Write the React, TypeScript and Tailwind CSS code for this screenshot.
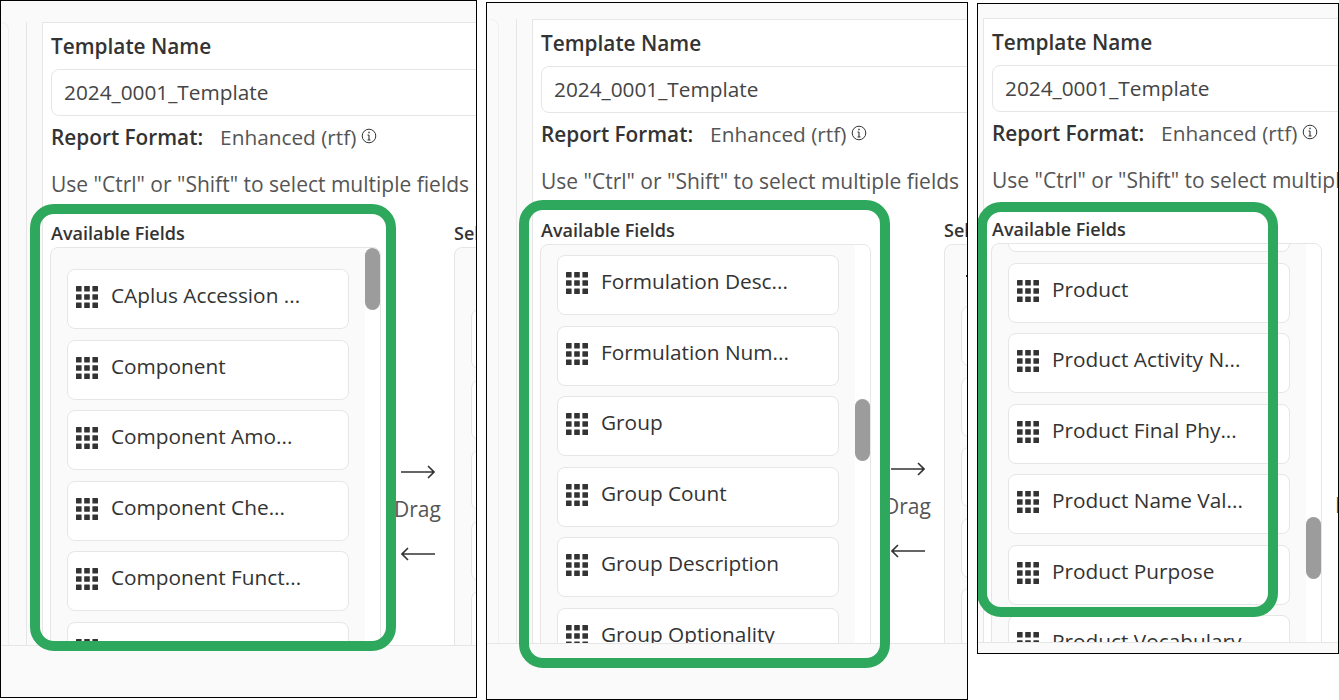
import { clsx } from "clsx";

const iconDots = [0, 1, 2];

function GripIcon() {
  return (
    <svg width="22" height="22" viewBox="0 0 22 22" className="shrink-0 fill-[#333333]">
      {iconDots.map((row) =>
        iconDots.map((col) => <rect key={`${row}-${col}`} x={col * 8.2} y={row * 8.2} width="5.6" height="5.6" rx="0.5" />),
      )}
    </svg>
  );
}

function FieldCard({ label }: { label?: string }) {
  return (
    <div className="flex h-[60px] w-[282px] shrink-0 gap-[13px] rounded-[8px] border border-[#e6e6e6] bg-white pt-[16px] pl-[8px]">
      {label && (
        <>
          <GripIcon />
          <span className="-mt-[5px] text-[20.8px] leading-[28px] text-[#333333]">{label}</span>
        </>
      )}
    </div>
  );
}

function Arrow({ flip }: { flip?: boolean }) {
  return (
    <svg width="34" height="14" viewBox="0 0 34 14" className={clsx("fill-none stroke-[#333333]", flip && "rotate-180")}>
      <path d="M0 7H33M27 1L33 7L27 13" strokeWidth="1.6" />
    </svg>
  );
}

type PanelProps = {
  className: string;
  bodyClass: string;
  listClass: string;
  barClass: string;
  footerClass: string;
  ringClass: string;
  fields: string[];
};

function Panel({ className, bodyClass, listClass, barClass, footerClass, ringClass, fields }: PanelProps) {
  return (
    <div className={clsx("relative flex shrink-0 flex-col overflow-hidden border border-black bg-[#fafafa]", className)}>
      <div className={clsx("flex min-h-0 flex-1 overflow-hidden", bodyClass)}>
        {/* left rail of the app behind the form */}
        <div className="flex h-[800px] w-[41px] shrink-0">
          <div className="h-full w-[8px] rounded-tr-[8px] border-t border-r border-[#f0f0f0] bg-[#fafafa]" />
          <div className="ml-[17px] h-full w-px bg-[#e6e6e6]" />
        </div>
        <div className="h-[800px] w-[900px] shrink-0 border-t border-l border-[#e6e6e6] bg-white pt-[9px] pl-[8px] font-['Open_Sans',sans-serif] text-[#333333]">
          <h2 className="text-[20.8px] leading-[28px] font-semibold">Template Name</h2>
          <div className="mt-[9px] flex h-[47px] w-[800px] items-center rounded-[8px] border border-[#e6e6e6] bg-white pl-[12px] text-[20.8px] text-[#444444]">
            2024_0001_Template
          </div>
          <div className="mt-[8px] flex h-[28px] items-center text-[20.8px] whitespace-nowrap">
            <span className="font-semibold">Report Format:</span>
            <span className="ml-[17px] text-[#555555]">Enhanced (rtf)</span>
            <svg width="16" height="16" viewBox="0 0 16 16" className="mb-[4px] ml-[5px] fill-none stroke-[#333333]">
              <circle cx="8" cy="8" r="6.8" strokeWidth="1" />
              <path d="M8 7V12M6.5 12H9.5M6.5 7H8" strokeWidth="1.1" />
              <path d="M8 3.8V5.2" strokeWidth="1.4" />
            </svg>
          </div>
          <p className="mt-[18px] text-[21px] leading-[28px] whitespace-nowrap text-[#555555]">
            Use "Ctrl" or "Shift" to select multiple fields
          </p>
          <div className="mt-[23px] flex">
            <div className="w-[330px] shrink-0">
              <h3 className="text-[18px] leading-[24px] font-semibold">Available Fields</h3>
              <div className="relative mt-[2px] -ml-px h-[500px] overflow-hidden rounded-[8px] border border-[#e6e6e6] bg-[#fafafa]">
                <div className={clsx("flex flex-col gap-[10.5px] pl-[16px]", listClass)}>
                  {fields.map((f, i) => (
                    <FieldCard key={i} label={f} />
                  ))}
                </div>
                <div className="absolute top-0 right-0 h-full w-[15px] bg-white" />
                <div className={clsx("absolute right-0 h-[62px] w-[15px] rounded-[8px] bg-[#9c9c9c]", barClass)} />
              </div>
            </div>
            <div className="flex w-[73px] shrink-0 flex-col items-center pt-[244px] text-[21px] text-[#555555]">
              <Arrow />
              <span className="mt-[16px] leading-[28px]">Drag</span>
              <div className="mt-[24px]">
                <Arrow flip />
              </div>
            </div>
            <div className="w-[331px] shrink-0">
              <h3 className="text-[18px] leading-[24px] font-semibold">Selected Fields</h3>
              <div className="mt-[2px] flex h-[500px] flex-col gap-[10.5px] rounded-[8px] border border-[#e6e6e6] bg-[#fafafa] pl-[16px]">
                <div className="mt-[30px] mb-[18.5px] ml-[5px] h-[2px] w-[5px] bg-[#333333]" />
                {Array.from({ length: 6 }, (_, i) => (
                  <FieldCard key={i} />
                ))}
              </div>
            </div>
          </div>
        </div>
      </div>
      <div className={clsx("shrink-0 border-t border-[#e6e6e6] bg-[#fafafa]", footerClass)} />
      {/* highlight drawn over the screenshot */}
      <div className={clsx("absolute rounded-[24px] border-[10px] border-[#2ea85c]", ringClass)} />
    </div>
  );
}

export default function App() {
  return (
    <div className="flex h-[700px] w-[1339px] items-start overflow-hidden bg-white">
      <Panel
        className="h-[698px] w-[477px]"
        bodyClass="pt-[21px]"
        listClass="pt-[21px]"
        barClass="top-0"
        footerClass="h-[52px]"
        ringClass="top-[203px] left-[29px] h-[447px] w-[366px]"
        fields={["CAplus Accession ...", "Component", "Component Amo...", "Component Che...", "Component Funct...", "Component Ma..."]}
      />
      <Panel
        className="mt-[2px] ml-[9px] h-[698px] w-[482px]"
        bodyClass="pt-[16px] pl-[4px]"
        listClass="pt-[10px]"
        barClass="top-[154px]"
        footerClass="h-[56px]"
        ringClass="top-[197px] left-[32px] h-[468px] w-[371px]"
        fields={["Formulation Desc...", "Formulation Num...", "Group", "Group Count", "Group Description", "Group Optionality"]}
      />
      <Panel
        className="mt-[3px] ml-[9px] h-[651px] w-[362px]"
        bodyClass="pt-[14px] pl-[5px] -ml-[41px]"
        listClass="-mt-[52px]"
        barClass="top-[273px]"
        footerClass="h-[11px]"
        ringClass="top-[198px] -left-px h-[415px] w-[301px]"
        fields={["", "Product", "Product Activity N...", "Product Final Phy...", "Product Name Val...", "Product Purpose", "Product Vocabulary"]}
      />
    </div>
  );
}
